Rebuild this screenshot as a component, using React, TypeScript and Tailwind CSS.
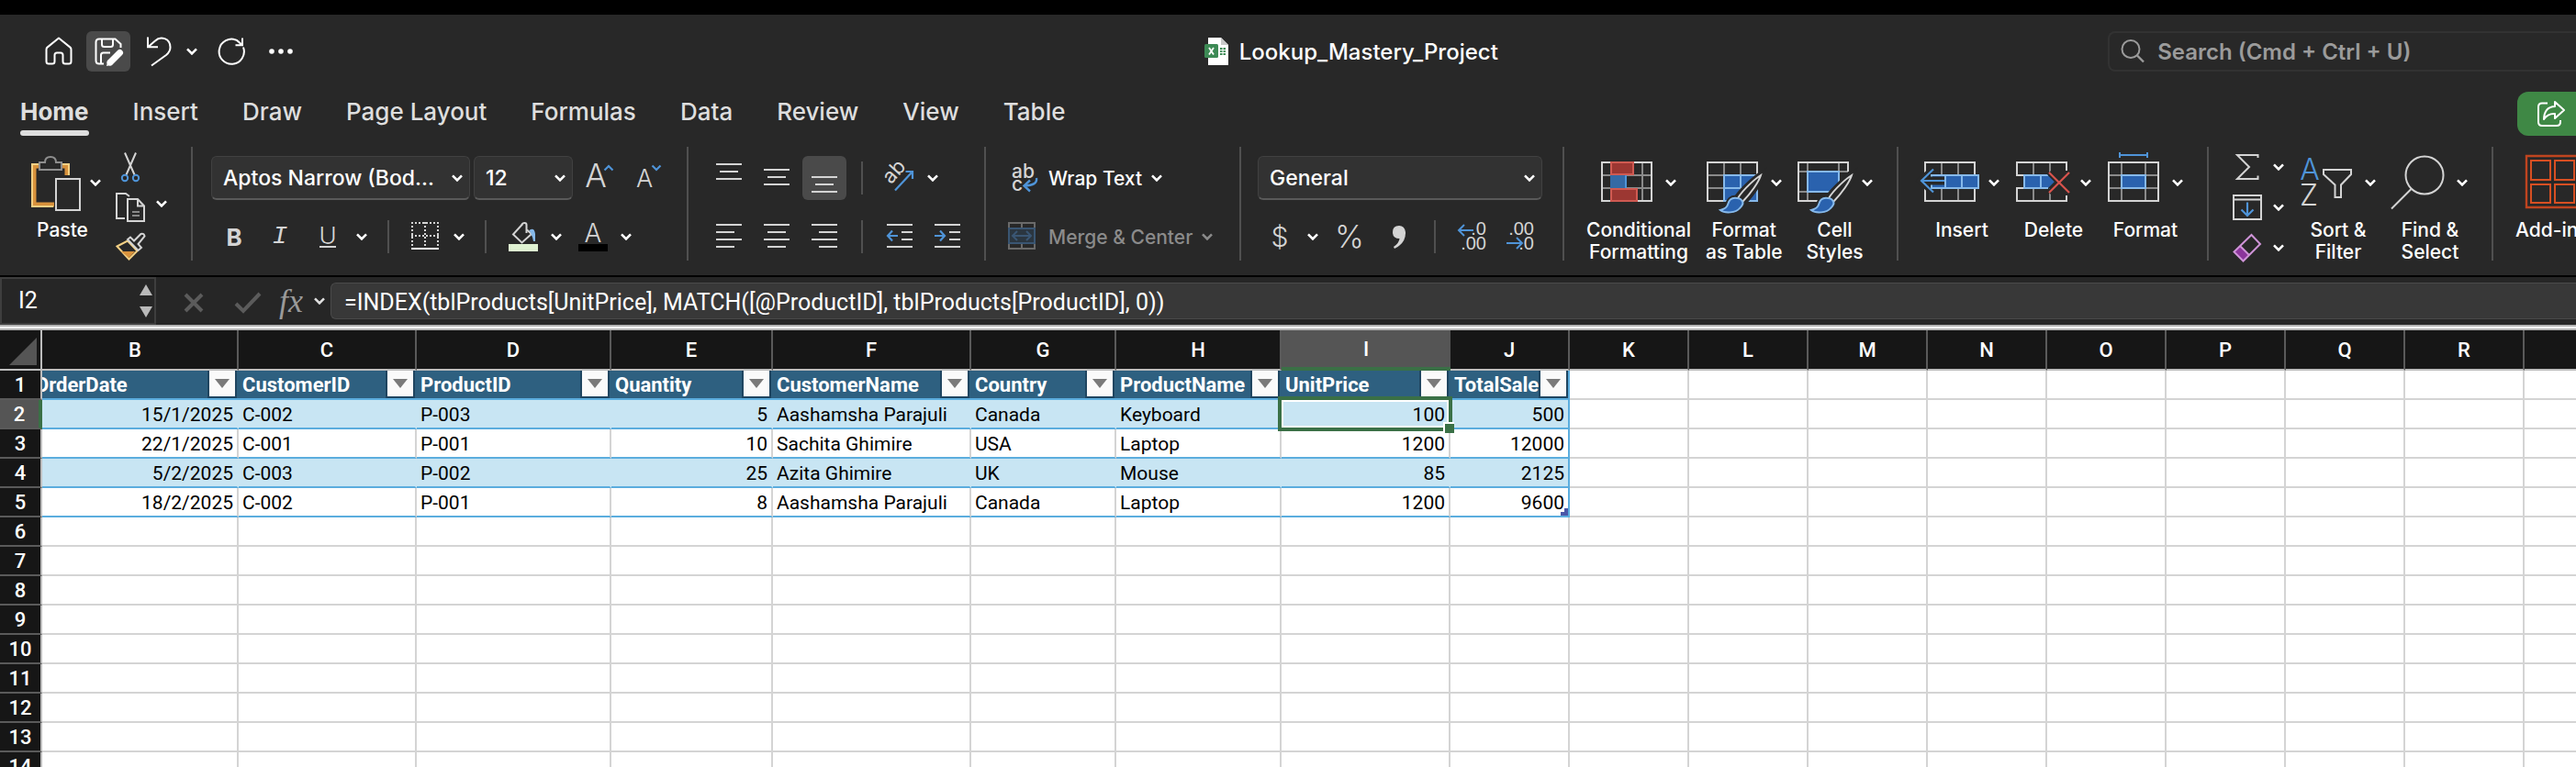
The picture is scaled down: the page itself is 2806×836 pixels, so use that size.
import type { ReactNode } from "react";

const GREY = "#d4d4d4";
const BLUE = "#4f94d8";
const SKY = "#86b9ea";
const DEEP = "#2a62ae";
const BG = "#282828";

function Chevron({ color = "#ffffff" }: { color?: string }) {
  return (
    <svg width="12" height="8" viewBox="0 0 12 8" fill="none" className="shrink-0" aria-hidden="true">
      <path d="M1 1.4 6 6.4 11 1.4" stroke={color} strokeWidth="2.6" />
    </svg>
  );
}

function Icon({ w = 48, h = 48, children }: { w?: number; h?: number; children: ReactNode }) {
  return (
    <svg width={w} height={h} viewBox={`0 0 ${w} ${h}`} fill="none" className="shrink-0 overflow-visible" aria-hidden="true">
      {children}
    </svg>
  );
}

function Tool({ label, pressed, children }: { label: string; pressed?: boolean; children: ReactNode }) {
  return (
    <button
      type="button"
      aria-label={label}
      aria-pressed={pressed}
      className={"flex shrink-0 items-center justify-center rounded-md " + (pressed ? "bg-[#4a4a4a]" : "")}
    >
      {children}
    </button>
  );
}

function Drop({ label }: { label: string }) {
  return (
    <button type="button" aria-label={label} className="flex h-11 w-6 shrink-0 items-center justify-center">
      <Chevron />
    </button>
  );
}

function Rule() {
  return <div className="mx-4 h-9 w-0.5 shrink-0 bg-[#505050]" />;
}

function Group({ className, children }: { className: string; children: ReactNode }) {
  return <section className={"flex h-31 shrink-0 border-r-2 border-[#505050] " + className}>{children}</section>;
}

function Rows({ children }: { children: ReactNode }) {
  return <div className="flex flex-col gap-4 pt-2.5">{children}</div>;
}

function Row({ children }: { children: ReactNode }) {
  return <div className="flex h-12 items-center">{children}</div>;
}

function Picker({ label, value, className }: { label: string; value: string; className: string }) {
  return (
    <div className={"grid h-12 shrink-0 items-center " + className}>
      <select
        aria-label={label}
        defaultValue={value}
        className="col-start-1 row-start-1 h-12 w-full appearance-none rounded-md border border-b-2 border-[#414141] border-b-[#5a5a5a] bg-[#323232] pt-0.5 pl-3 text-[23px] font-medium text-white"
      >
        <option>{value}</option>
      </select>
      <span className="pointer-events-none col-start-1 row-start-1 justify-self-end pr-2">
        <Chevron />
      </span>
    </div>
  );
}

function BigTool({ lines, iconWidth = 56, drop = true, children }: { lines: string[]; iconWidth?: number; drop?: boolean; children: ReactNode }) {
  return (
    <button type="button" className="flex shrink-0 flex-col items-center text-[21px] leading-6 font-medium text-white">
      <span className="flex items-center gap-3.5 pb-px">
        <Icon w={iconWidth} h={78}>
          {children}
        </Icon>
        {drop && <Chevron />}
      </span>
      {lines.map((line) => (
        <span key={line} className="whitespace-nowrap">
          {line}
        </span>
      ))}
    </button>
  );
}

function Lines({ rows }: { rows: [number, number, number][] }) {
  return (
    <Icon>
      {rows.map(([x1, x2, y]) => (
        <path key={y} d={`M${x1} ${y}H${x2}`} stroke={GREY} strokeWidth="2" />
      ))}
    </Icon>
  );
}

function Brush() {
  return (
    <g>
      <path d="M60 30C55 33 40 46 33 56L39 62C48 52 58 39 60 30Z" fill={BG} stroke={BG} strokeWidth="7" />
      <path d="M33 56C27 55 24 59 23 63 22 67 19 69 15 69 20 73 33 73 37 67 39 65 40 61 39 60Z" fill={BG} stroke={BG} strokeWidth="6" />
      <path d="M59 31C54 34 40 46 34 56L39 60C48 51 57 38 59 31Z" stroke={GREY} strokeWidth="2" />
      <path d="M33 56C27 55 24 59 23 63 22 67 19 68 15 69 20 73 32 72 36 67 39 64 40 61 39 60 38 57 36 56 33 56Z" fill={DEEP} stroke={SKY} strokeWidth="2" />
    </g>
  );
}

function TitleBar() {
  return (
    <header className="grid h-20 grid-cols-[46.75%_1fr_18.17%] items-center">
      <div className="flex items-center gap-1.5 pl-10">
        <Tool label="Home screen">
          <Icon h={44}>
            <path
              d="M24 7.5 11.5 17.6Q10.5 18.4 10.5 20V33Q10.5 35.5 13 35.5H17Q19.5 35.5 19.5 33V26Q19.5 23.5 22 23.5H26Q28.5 23.5 28.5 26V33Q28.5 35.5 31 35.5H35Q37.5 35.5 37.5 33V20Q37.5 18.4 36.5 17.6Z"
              stroke="#fff"
              strokeWidth="2"
              strokeLinejoin="round"
            />
          </Icon>
        </Tool>
        <Tool label="Save" pressed>
          <Icon h={44}>
            <path d="M19 35.5H14Q10.5 35.5 10.5 32V12Q10.5 8.5 14 8.5H31.5L37.5 14V18" stroke="#fff" strokeWidth="2" />
            <path d="M17 9V14.5Q17 17 19.5 17H26.5Q29 17 29 14.5V9M16 35V26Q16 23.5 18.5 23.5H26" stroke="#fff" strokeWidth="2" />
            <path d="M36.5 23.5 26 34" stroke="#fff" strokeWidth="7" strokeLinecap="round" />
            <path d="M22 38 23.5 31.5 28.5 36.5Z" fill="#fff" />
          </Icon>
        </Tool>
        <div className="flex items-center">
          <Tool label="Undo">
            <Icon h={44}>
              <path d="M13 6.5V17.3H24M13.5 17 21 10.5C27 4.5 37.5 8 37.5 17.5 37.5 21 36 23.5 33 26L17 37.5" stroke="#fff" strokeWidth="2" />
            </Icon>
          </Tool>
          <button type="button" aria-label="Undo history" className="flex h-11 w-[26px] items-center justify-center">
            <Chevron />
          </button>
        </div>
        <Tool label="Redo">
          <Icon h={44}>
            <path d="M37 17.5A13.6 13.6 0 1 1 30 9.9L35.5 14.8M36 7.5V15.3H28.5" stroke="#fff" strokeWidth="2" />
          </Icon>
        </Tool>
        <Tool label="More commands">
          <Icon h={44}>
            <circle cx="14" cy="22" r="2.8" fill="#fff" />
            <circle cx="24" cy="22" r="2.8" fill="#fff" />
            <circle cx="34" cy="22" r="2.8" fill="#fff" />
          </Icon>
        </Tool>
      </div>
      <h1 className="flex items-center gap-3 text-2xl font-medium whitespace-nowrap text-white">
        <Icon w={26} h={30}>
          <path d="M4 0H18L26 8V30H4Z" fill="#fff" />
          <path d="M18 0V8H26Z" fill="#c9c9c9" />
          <path d="M17 11H23V19H17Z" fill="#3d8a55" />
          <path d="M17 13.7H23M17 16.5H23M20 11V19" stroke="#fff" />
          <rect y="7" width="15" height="15" rx="1.5" fill="#3d8a55" />
          <path d="M5 11 10 18.5M10 11 5 18.5" stroke="#fff" strokeWidth="1.8" />
        </Icon>
        <span className="pt-0.5">Lookup_Mastery_Project</span>
      </h1>
      <label className="flex h-11 items-center gap-3.5 rounded-l-lg border-2 border-r-0 border-[#323232] pl-3">
        <Icon w={26} h={26}>
          <circle cx="11" cy="10.5" r="9.5" stroke="#9b9b9b" strokeWidth="2" />
          <path d="M18 17.5 25 24.5" stroke="#9b9b9b" strokeWidth="2.4" />
        </Icon>
        <input
          type="search"
          aria-label="Search"
          placeholder="Search (Cmd + Ctrl + U)"
          className="min-w-0 flex-1 bg-transparent pt-0.5 text-2xl font-semibold text-white outline-none placeholder:text-[#9b9b9b]"
        />
      </label>
    </header>
  );
}

const TABS = ["Home", "Insert", "Draw", "Page Layout", "Formulas", "Data", "Review", "View", "Table"];

function TabBar() {
  return (
    <div className="flex h-16 justify-between overflow-hidden">
      <nav className="flex items-start gap-12 pl-5.5 text-[26px] leading-8 text-[#dedede]">
        {TABS.map((tab) => (
          <button
            key={tab}
            type="button"
            className={"flex flex-col gap-1 whitespace-nowrap pt-2.5 " + (tab === "Home" ? "font-bold" : "font-medium")}
          >
            {tab}
            {tab === "Home" && <span className="h-1.5 w-full rounded-full bg-[#dedede]" />}
          </button>
        ))}
      </nav>
      <button
        type="button"
        className="mt-1 flex h-12 w-16 items-center gap-3 overflow-hidden rounded-l-xl bg-[#3f8845] pl-5.5 text-2xl font-medium text-white"
      >
        <Icon w={30} h={28}>
          <path d="M11 2.5H5Q1 2.5 1 6.5V23Q1 27 5 27H21Q25 27 25 23V21" stroke="#fff" strokeWidth="2" />
          <path d="M19 1 29 10 19 19V14Q11 13.5 7 20 7.5 6.5 19 6Z" stroke="#fff" strokeWidth="2" strokeLinejoin="round" />
        </Icon>
        Share
      </button>
    </div>
  );
}

function ClipboardGroup() {
  return (
    <Group className="w-[210px] gap-3.5 pl-6.5">
      <button type="button" className="flex shrink-0 flex-col items-center text-[21px] leading-6 font-medium text-white">
        <span className="flex items-center gap-2.5 pb-px">
          <Icon w={62} h={78}>
            <path d="M16 21H11V63H33M42 21H47V31" stroke="#d8923c" strokeWidth="5" />
            <path d="M16 19H9V65H32M42 19H49V31" stroke="#f3d084" strokeWidth="2" />
            <path d="M17 17H23Q23 11 29 11T35 17H41V25H17Z" stroke="#8e8e8e" strokeWidth="2" />
            <path d="M35 35H61V69H35Z" stroke={GREY} strokeWidth="2" />
          </Icon>
          <Chevron />
        </span>
        Paste
      </button>
      <div className="flex flex-col">
        <Tool label="Cut">
          <Icon w={36} h={44}>
            <path d="M12 6.5 22.5 30.5M24 6.5 13.5 30.5" stroke={GREY} strokeWidth="2" />
            <circle cx="12" cy="34" r="3.2" stroke={BLUE} strokeWidth="2" />
            <circle cx="24" cy="34" r="3.2" stroke={BLUE} strokeWidth="2" />
          </Icon>
        </Tool>
        <Tool label="Copy">
          <Icon w={36} h={44}>
            <path d="M12 34H3V7H13L17 10" stroke={GREY} strokeWidth="2" />
            <path d="M15 13H26L33 20.5V37H15ZM26 13V20.5H33" stroke={GREY} strokeWidth="2" />
            <path d="M20 27H28M20 31H28" stroke="#a8a8a8" strokeWidth="1.6" />
          </Icon>
        </Tool>
        <Tool label="Format painter">
          <Icon w={36} h={44}>
            <path d="M3.5 20.5 15 14.5 25.5 25.5 16.5 34.5Z" stroke="#f3d084" strokeWidth="2" />
            <path d="M8 26H23L16.5 33Z" fill="#d8923c" />
            <path d="M15 13 18 10.5 22 14.5 29.5 7Q33 6 33.5 9.5L26.5 18 30 22 26.5 25Z" fill={BG} stroke={GREY} strokeWidth="2" />
          </Icon>
        </Tool>
      </div>
      <div className="-ml-2.5 flex items-center">
        <Drop label="Copy options" />
      </div>
    </Group>
  );
}

function FontGroup() {
  return (
    <Group className="w-[540px] pl-5">
      <Rows>
        <Row>
          <Picker label="Font" value="Aptos Narrow (Bod…" className="w-[282px]" />
          <div className="w-1" />
          <Picker label="Font size" value="12" className="w-27" />
          <div className="ml-1.5 flex gap-1">
            <Tool label="Increase font size">
              <Icon>
                <text x="19" y="34" textAnchor="middle" fontSize="35" fontWeight="300" fill={GREY}>
                  A
                </text>
                <path d="M28.5 15.5 33 11 37.5 15.5" stroke={BLUE} strokeWidth="2.2" />
              </Icon>
            </Tool>
            <Tool label="Decrease font size">
              <Icon>
                <text x="20" y="34" textAnchor="middle" fontSize="27" fontWeight="300" fill={GREY}>
                  A
                </text>
                <path d="M28.5 10.5 33 15 37.5 10.5" stroke={BLUE} strokeWidth="2.2" />
              </Icon>
            </Tool>
          </div>
        </Row>
        <Row>
          <button type="button" aria-label="Bold" className="w-[50px] text-[26px] font-bold text-[#d4d4d4]">
            B
          </button>
          <button type="button" aria-label="Italic" className="w-[50px] font-['Liberation_Mono',monospace] text-[28px] text-[#d4d4d4] italic">
            I
          </button>
          <button type="button" aria-label="Underline" className="w-[52px]">
            <Icon w={52}>
              <text x="27" y="32" textAnchor="middle" fontSize="26" fontWeight="300" fill={GREY}>
                U
              </text>
              <path d="M18 35H36" stroke={GREY} strokeWidth="2" />
            </Icon>
          </button>
          <Drop label="Underline style" />
          <Rule />
          <Tool label="Borders">
            <Icon>
              <path d="M8 9H38M8 23H38M9 8V36M23 8V36M37 8V36" stroke={GREY} strokeWidth="2" strokeDasharray="2 2" />
              <path d="M8 37H38" stroke="#fff" strokeWidth="2" />
            </Icon>
          </Tool>
          <Drop label="Border style" />
          <Rule />
          <Tool label="Fill colour">
            <Icon>
              <path d="M22.5 11 13 21.5 22.5 30.5 33 21 28 16.5" stroke={GREY} strokeWidth="2" />
              <path d="M22.5 12V11Q23 9 25.5 9 27.5 9 27.5 11V20" stroke={GREY} strokeWidth="2" />
              <path d="M30.5 17Q36 13 37 21V29H35Q34 23 30.5 17Z" fill={SKY} />
              <path d="M8 32H40V40H8Z" fill="#dff2d2" />
            </Icon>
          </Tool>
          <Drop label="Fill colours" />
          <div className="w-1" />
          <Tool label="Font colour">
            <Icon>
              <text x="24" y="30" textAnchor="middle" fontSize="28" fontWeight="300" fill={GREY}>
                A
              </text>
              <path d="M8 32H40V40H8Z" fill="#000" />
            </Icon>
          </Tool>
          <Drop label="Font colours" />
        </Row>
      </Rows>
    </Group>
  );
}

function AlignGroup() {
  return (
    <Group className="w-[324px] pl-5">
      <Rows>
        <Row>
          <div className="flex gap-1">
            <Tool label="Top align">
              <Lines rows={[[10, 38, 9], [14, 34, 17], [10, 38, 25]]} />
            </Tool>
            <Tool label="Middle align">
              <Lines rows={[[10, 38, 15], [14, 34, 23], [10, 38, 31]]} />
            </Tool>
            <Tool label="Bottom align" pressed>
              <Lines rows={[[10, 38, 23], [14, 34, 31], [10, 38, 39]]} />
            </Tool>
          </div>
          <Rule />
          <Tool label="Orientation">
            <Icon>
              <text x="20" y="25" textAnchor="middle" fontSize="22" fill={GREY} transform="rotate(-48 18 20)">
                ab
              </text>
              <path d="M19 37.5 38 17M30.5 17H38V25" stroke={BLUE} strokeWidth="2.2" />
            </Icon>
          </Tool>
          <Drop label="Orientation options" />
        </Row>
        <Row>
          <div className="flex gap-1">
            <Tool label="Align left">
              <Lines rows={[[10, 38, 11], [10, 30, 19], [10, 38, 27], [10, 30, 35]]} />
            </Tool>
            <Tool label="Align centre">
              <Lines rows={[[10, 38, 11], [14, 34, 19], [10, 38, 27], [14, 34, 35]]} />
            </Tool>
            <Tool label="Align right">
              <Lines rows={[[10, 38, 11], [18, 38, 19], [10, 38, 27], [18, 38, 35]]} />
            </Tool>
          </div>
          <Rule />
          <div className="flex gap-1">
            <Tool label="Decrease indent">
              <Icon>
                <path d="M10 11H38M26 19H38M26 27H38M10 35H38" stroke={GREY} strokeWidth="2" />
                <path d="M22 23H11M16 17.5 11 23 16 28.5" stroke={BLUE} strokeWidth="2.2" />
              </Icon>
            </Tool>
            <Tool label="Increase indent">
              <Icon>
                <path d="M10 11H38M26 19H38M26 27H38M10 35H38" stroke={GREY} strokeWidth="2" />
                <path d="M10 23H21M16 17.5 21 23 16 28.5" stroke={BLUE} strokeWidth="2.2" />
              </Icon>
            </Tool>
          </div>
        </Row>
      </Rows>
    </Group>
  );
}

function WrapGroup() {
  return (
    <Group className="w-[278px] pl-4">
      <Rows>
        <Row>
          <button type="button" className="flex items-center text-[21px] font-medium whitespace-nowrap text-white">
            <Icon>
              <text x="12" y="24" fontSize="21" fill={GREY}>
                ab
              </text>
              <text x="12" y="38" fontSize="21" fill={GREY}>
                c
              </text>
              <path d="M39 24Q40.5 32 26 32.5M32 26.5 25.5 32.5 32 38.5" stroke={BLUE} strokeWidth="2.4" />
            </Icon>
            <span className="pt-0.5 pr-2.5 pl-1">Wrap Text</span>
            <Chevron />
          </button>
        </Row>
        <Row>
          <button type="button" className="flex items-center text-[21px] font-medium whitespace-nowrap text-[#8b8b8b]">
            <Icon>
              <path d="M9 15V9H37V15M9 31V37H37V31M23 9V15M23 31V37" stroke="#6a6a6a" strokeWidth="2" />
              <path d="M9 15H37V31H9Z" fill="#2b3640" stroke="#3a5673" strokeWidth="2" />
              <path d="M13 23H33M18 18 13 23 18 28M28 18 33 23 28 28" stroke="#3a5673" strokeWidth="2" />
            </Icon>
            <span className="pt-0.5 pr-2.5 pl-1">Merge &amp; Center</span>
            <Chevron color="#8b8b8b" />
          </button>
        </Row>
      </Rows>
    </Group>
  );
}

function Digits({ x, y, children }: { x: number; y: number; children: string }) {
  return (
    <text x={x} y={y} textAnchor="end" fontSize="20" fontFamily="'Liberation Sans Narrow', 'Liberation Sans', sans-serif" fill={GREY}>
      {children}
    </text>
  );
}

function NumberGroup() {
  return (
    <Group className="w-[352px] pl-4.5">
      <Rows>
        <Row>
          <Picker label="Number format" value="General" className="w-[310px]" />
        </Row>
        <Row>
          <button type="button" aria-label="Currency" className="w-12 text-[30px] leading-12 font-light text-[#d4d4d4]">
            $
          </button>
          <Drop label="Currency options" />
          <button type="button" aria-label="Percent" className="ml-1 w-12 text-[34px] leading-12 font-light text-[#d4d4d4]">
            %
          </button>
          <div className="w-1" />
          <Tool label="Comma style">
            <Icon>
              <path d="M26 12Q32 12 33 19 33.5 31 21 37L20 35Q26 31 26.5 26 19 26 19 19 19 12 26 12Z" fill={GREY} />
            </Icon>
          </Tool>
          <Rule />
          <div className="flex gap-1">
            <Tool label="Increase decimal">
              <Icon>
                <Digits x={39} y={22}>.0</Digits>
                <Digits x={39} y={38}>.00</Digits>
                <path d="M25 17H9M15 11 9 17 15 23" stroke={BLUE} strokeWidth="2" />
              </Icon>
            </Tool>
            <Tool label="Decrease decimal">
              <Icon>
                <Digits x={39} y={22}>.00</Digits>
                <Digits x={39} y={38}>.0</Digits>
                <path d="M9 31H26M20 25 26 31 20 37" stroke={BLUE} strokeWidth="2" />
              </Icon>
            </Tool>
          </div>
        </Row>
      </Rows>
    </Group>
  );
}

function StylesGroup() {
  return (
    <Group className="w-[364px] gap-4 pl-6">
      <BigTool lines={["Conditional", "Formatting"]}>
        <path d="M11 17V59M45 17V59M1 31H55M1 45H55" stroke="#8a8a8a" strokeWidth="2" />
        <path d="M1 17H55V59H1Z" stroke={GREY} strokeWidth="2" />
        <path d="M11 17H35V30H11ZM11 46H39V59H11Z" fill="#9c3732" stroke="#d05a52" strokeWidth="2" />
        <path d="M10 31H28V45H10Z" fill="#356aa5" />
        <path d="M27 31V45" stroke={BLUE} strokeWidth="2" />
      </BigTool>
      <BigTool lines={["Format", "as Table"]}>
        <path d="M19 17V31M37 17V31M1 31H19M1 45H19" stroke="#8a8a8a" strokeWidth="2" />
        <path d="M19 59H1V17H55V31" stroke={GREY} strokeWidth="2" />
        <path d="M19 31H55V59H19Z" fill={DEEP} stroke={SKY} strokeWidth="2" />
        <path d="M37 31V59M19 45H55" stroke={SKY} strokeWidth="2" />
        <Brush />
      </BigTool>
      <BigTool lines={["Cell", "Styles"]}>
        <path d="M11 17V59M45 17V27M1 27H55M1 49H20" stroke="#8a8a8a" strokeWidth="2" />
        <path d="M22 59H1V17H55V27" stroke={GREY} strokeWidth="2" />
        <path d="M11 27H45V49H11Z" fill={DEEP} stroke={SKY} strokeWidth="2" />
        <Brush />
      </BigTool>
    </Group>
  );
}

function CellsGroup() {
  return (
    <Group className="w-[338px] gap-4.5 pl-7">
      <BigTool lines={["Insert"]}>
        <path d="M19 17V59M37 17V59" stroke="#8a8a8a" strokeWidth="2" />
        <path d="M1 28V17H55V59H1V46" stroke={GREY} strokeWidth="2" />
        <path d="M10 23-5 37 10 51" stroke={BG} strokeWidth="6" />
        <path d="M8 31H59V45H8Z" fill={DEEP} stroke={SKY} strokeWidth="2" />
        <path d="M-3 37H22" stroke={BG} strokeWidth="9" />
        <path d="M23 31V45M41 31V45" stroke={SKY} strokeWidth="2" />
        <path d="M-3 37H22M10 24.5-3 37 10 49.5" stroke={BLUE} strokeWidth="2.2" />
      </BigTool>
      <BigTool lines={["Delete"]}>
        <path d="M19 17V31M37 17V31M19 45V59M37 45V59" stroke="#8a8a8a" strokeWidth="2" />
        <path d="M55 26V17H1V31H34M55 53V59H1V45H34" stroke={GREY} strokeWidth="2" />
        <path d="M9 31H35L42 38 35 45H9Z" fill={DEEP} />
        <path d="M35 31H9V45H35M27 31V45" stroke={SKY} strokeWidth="2" />
        <path d="M36 28 58 50M58 28 36 50" stroke={BG} strokeWidth="6" />
        <path d="M36 28 58 50M58 28 36 50" stroke="#d9544d" strokeWidth="2.2" />
      </BigTool>
      <BigTool lines={["Format"]}>
        <path d="M15 17V59M41 17V59M1 31H55M1 45H55" stroke="#8a8a8a" strokeWidth="2" />
        <path d="M1 17H55V59H1Z" stroke={GREY} strokeWidth="2" />
        <path d="M15 31H41V45H15Z" fill={DEEP} stroke={SKY} strokeWidth="2" />
        <path d="M13 6V12M43 6V12M13 9H43" stroke={BLUE} strokeWidth="2" />
      </BigTool>
    </Group>
  );
}

function EditingGroup() {
  return (
    <Group className="w-[310px] gap-4.5 pl-6">
      <div className="flex flex-col">
        <button type="button" aria-label="AutoSum" className="flex items-center gap-2.5">
          <Icon w={36} h={44}>
            <path d="M29.5 12V9H7L20 22 7 35H29.5V31.5" stroke={GREY} strokeWidth="2" />
          </Icon>
          <Chevron />
        </button>
        <button type="button" aria-label="Fill" className="flex items-center gap-2.5">
          <Icon w={36} h={44}>
            <path d="M3 9H33V35H3ZM3 13.5H33" stroke={GREY} strokeWidth="2" />
            <path d="M18 16.5V31M11.5 24.5 18 31 24.5 24.5" stroke={BLUE} strokeWidth="2.2" />
          </Icon>
          <Chevron />
        </button>
        <button type="button" aria-label="Clear" className="flex items-center gap-2.5">
          <Icon w={36} h={44}>
            <path d="M10 20 20 30 13.5 36.5 3.5 26.5Z" fill="#8b359b" />
            <path d="M22.5 8 32 18 13.5 36.5 3.5 26.5ZM10 20 20 30" stroke="#cf94d8" strokeWidth="2" />
          </Icon>
          <Chevron />
        </button>
      </div>
      <BigTool lines={["Sort &", "Filter"]}>
        <text x="10" y="36" textAnchor="middle" fontSize="32" fontWeight="300" fill={BLUE}>
          A
        </text>
        <text x="9" y="64" textAnchor="middle" fontSize="32" fontWeight="300" fill={GREY}>
          Z
        </text>
        <path d="M25 25H55V30L44 41.5V55H37.5V41.5L25 30Z" stroke={GREY} strokeWidth="2" />
      </BigTool>
      <BigTool lines={["Find &", "Select"]}>
        <circle cx="35" cy="31" r="20.5" stroke={GREY} strokeWidth="2" />
        <path d="M20.5 46-1 67.5" stroke={GREY} strokeWidth="2" />
      </BigTool>
    </Group>
  );
}

function AddInsGroup() {
  return (
    <section className="flex shrink-0 pl-6">
      <BigTool lines={["Add-ins"]} iconWidth={58} drop={false}>
        <path d="M1 10H57V66H1Z" stroke="#c0441f" strokeWidth="2.4" />
        <path d="M6 15H27V36H6ZM32 15H53V36H32ZM6 41H27V61H6ZM32 41H53V61H32Z" stroke="#d84f22" strokeWidth="2" />
      </BigTool>
    </section>
  );
}

function FormulaBar() {
  return (
    <div className="flex h-13.5 shrink-0 items-center border-t-2 border-black bg-[#262626]">
      <div className="flex h-full w-[170px] shrink-0 items-center justify-between border-2 border-[#3e3e3e] pr-0.5 pl-4.5">
        <input
          aria-label="Name box"
          defaultValue="I2"
          className="w-24 bg-transparent font-[Roboto,sans-serif] text-[25px] leading-8 text-white outline-none"
        />
        <Icon w={14} h={36}>
          <path d="M7 0 14 12H0ZM7 36 14 24H0Z" fill="#b9b9b9" />
        </Icon>
      </div>
      <div className="flex shrink-0 items-center pl-4">
        <Tool label="Cancel">
          <Icon>
            <path d="M16 17 34 35M34 17 16 35" stroke="#5b5b5b" strokeWidth="4" />
          </Icon>
        </Tool>
        <div className="w-3" />
        <Tool label="Enter">
          <Icon>
            <path d="M11 27 19 35 37 16" stroke="#5b5b5b" strokeWidth="4" />
          </Icon>
        </Tool>
        <button
          type="button"
          aria-label="Insert function"
          className="ml-2.5 flex h-11 items-center gap-3 pr-1.5 font-['Liberation_Serif',serif] text-[36px] leading-9 text-[#9a9a9a] italic"
        >
          fx
          <Chevron color="#e0e0e0" />
        </button>
      </div>
      <input
        aria-label="Formula"
        defaultValue="=INDEX(tblProducts[UnitPrice], MATCH([@ProductID], tblProducts[ProductID], 0))"
        className="h-10 min-w-0 flex-1 rounded-l-md border border-r-0 border-[#4a4a4a] bg-[#383838] pt-0.5 pl-3.5 font-[Roboto,sans-serif] text-[25px] text-white outline-none"
      />
    </div>
  );
}

type Column = { id: string; width: string; numeric?: boolean; title?: string };

const COLUMNS: Column[] = [
  { id: "B", width: "w-[214px]", numeric: true, title: "OrderDate" },
  { id: "C", width: "w-[194px]", title: "CustomerID" },
  { id: "D", width: "w-[212px]", title: "ProductID" },
  { id: "E", width: "w-[176px]", numeric: true, title: "Quantity" },
  { id: "F", width: "w-[216px]", title: "CustomerName" },
  { id: "G", width: "w-[158px]", title: "Country" },
  { id: "H", width: "w-[180px]", title: "ProductName" },
  { id: "I", width: "w-[184px]", numeric: true, title: "UnitPrice" },
  { id: "J", width: "w-[130px]", numeric: true, title: "TotalSale" },
  ...["K", "L", "M", "N", "O", "P", "Q", "R", "S"].map((id) => ({ id, width: "w-[130px]" })),
];

const RECORDS = [
  ["15/1/2025", "C-002", "P-003", "5", "Aashamsha Parajuli", "Canada", "Keyboard", "100", "500"],
  ["22/1/2025", "C-001", "P-001", "10", "Sachita Ghimire", "USA", "Laptop", "1200", "12000"],
  ["5/2/2025", "C-003", "P-002", "25", "Azita Ghimire", "UK", "Mouse", "85", "2125"],
  ["18/2/2025", "C-002", "P-001", "8", "Aashamsha Parajuli", "Canada", "Laptop", "1200", "9600"],
];

function RowHeader({ n }: { n: number }) {
  return (
    <th
      scope="row"
      className={
        "border-b-2 border-b-[#5a5a5a] px-0 pt-0.5 pb-0 text-center text-[22px] font-medium text-white " +
        (n === 2 ? "border-r-4 border-r-[#3a7046] bg-[#555555]" : "border-r-2 border-r-[#bdbdbd] bg-[#161616]")
      }
    >
      {n}
    </th>
  );
}

function Sheet() {
  return (
    <div className="min-h-0 flex-1 overflow-hidden bg-white">
      <table className="w-[2880px] table-fixed border-separate border-spacing-0 font-[Roboto,sans-serif] leading-7">
        <colgroup>
          <col className="w-[46px]" />
          {COLUMNS.map((c) => (
            <col key={c.id} className={c.width} />
          ))}
        </colgroup>
        <thead>
          <tr className="h-11 bg-[#161616]">
            <td className="border-r-2 border-b-2 border-[#bdbdbd] p-0 align-bottom">
              <svg width="40" height="34" viewBox="0 0 40 34" aria-hidden="true">
                <path d="M40 0V30H10Z" fill="#555555" />
              </svg>
            </td>
            {COLUMNS.map((c) => (
              <th
                key={c.id}
                scope="col"
                className={
                  "px-0 pt-0.5 pb-0 text-center text-[22px] font-medium text-white " +
                  (c.id === "I"
                    ? "border-b-4 border-b-[#3a7046] bg-[#555555]"
                    : "border-r-2 border-b-2 border-r-[#5a5a5a] border-b-[#bdbdbd]")
                }
              >
                <span className={c.id === "B" ? "-ml-2.5" : ""}>{c.id}</span>
              </th>
            ))}
          </tr>
        </thead>
        <tbody>
          <tr className="h-8">
            <RowHeader n={1} />
            {COLUMNS.map((c) =>
              c.title ? (
                <td key={c.id} className={"overflow-hidden border-b-2 border-b-[#5badde] bg-[#2e6080] p-0 align-top " + (c.id === "J" ? "border-r-2 border-r-[#5badde]" : "")}>
                  <div className={"flex h-7.5 items-start justify-between " + (c.id === "B" ? "-ml-2" : "pl-1") + (c.id === "J" ? "" : " pr-0.5")}>
                    <span className="pt-0.5 text-[22px] font-bold whitespace-nowrap text-white">{c.title}</span>
                    <button
                      type="button"
                      aria-label={"Filter " + c.title}
                      className="flex h-7.5 w-8 shrink-0 items-center justify-center border-x-2 border-b-2 border-[#1f4560] bg-[#fafafa]"
                    >
                      <svg width="16" height="10" viewBox="0 0 16 10" aria-hidden="true">
                        <path d="M0 0H16L8 10Z" fill="#7a7a7a" />
                      </svg>
                    </button>
                  </div>
                </td>
              ) : (
                <td key={c.id} className="border-r-2 border-b-2 border-[#d4d4d4] p-0" />
              ),
            )}
          </tr>
          {RECORDS.map((record, r) => (
            <tr key={r} className={"h-8 " + (r % 2 === 0 ? "bg-[#c8e5f3]" : "bg-white")}>
              <RowHeader n={r + 2} />
              {COLUMNS.map((c, i) => {
                if (i >= record.length) {
                  return <td key={c.id} className="border-r-2 border-b-2 border-[#d4d4d4] bg-white p-0" />;
                }
                const edge = c.id === "J" ? "border-r-[#5badde]" : r % 2 === 0 ? "border-r-[#c8e5f3]" : "border-r-[#d4d4d4]";
                return (
                  <td
                    key={c.id}
                    className={
                      "relative border-r-2 border-b-2 border-b-[#5badde] px-1 pt-0.5 pb-0 text-[21px] whitespace-nowrap text-black " +
                      edge +
                      (c.numeric ? " text-right" : " text-left")
                    }
                  >
                    {record[i]}
                    {c.id === "I" && r === 0 && (
                      <>
                        <span className="absolute -inset-1 z-10 border-4 border-[#3a7046] ring-2 ring-white ring-inset" />
                        <span className="absolute -right-1.5 -bottom-1.5 z-20 h-3 w-3 border-t-2 border-l-2 border-white bg-[#3a7046]" />
                      </>
                    )}
                    {c.id === "J" && r === RECORDS.length - 1 && (
                      <svg width="8" height="8" viewBox="0 0 8 8" className="absolute right-0 bottom-0" aria-hidden="true">
                        <path d="M4 0H8V8H0V4H4Z" fill="#4a57a8" />
                      </svg>
                    )}
                  </td>
                );
              })}
            </tr>
          ))}
          {Array.from({ length: 9 }, (_, k) => (
            <tr key={k} className="h-8">
              <RowHeader n={k + 6} />
              {COLUMNS.map((c) => (
                <td key={c.id} className="border-r-2 border-b-2 border-[#d4d4d4] p-0" />
              ))}
            </tr>
          ))}
        </tbody>
      </table>
    </div>
  );
}

export default function App() {
  return (
    <div className="flex h-screen flex-col overflow-hidden bg-[#282828] font-[Inter,sans-serif]">
      <div className="h-4 shrink-0 bg-black" />
      <TitleBar />
      <TabBar />
      <div className="flex shrink-0 overflow-hidden pb-4">
        <ClipboardGroup />
        <FontGroup />
        <AlignGroup />
        <WrapGroup />
        <NumberGroup />
        <StylesGroup />
        <CellsGroup />
        <EditingGroup />
        <AddInsGroup />
      </div>
      <FormulaBar />
      <div className="h-1.5 shrink-0 border-y-2 border-[#b4b4b4] bg-white" />
      <Sheet />
    </div>
  );
}
